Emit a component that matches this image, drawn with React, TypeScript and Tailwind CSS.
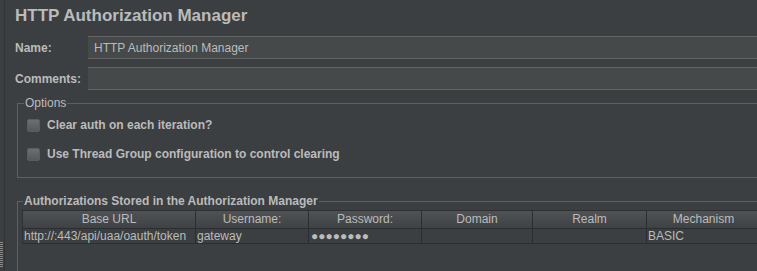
import React from 'react';

const columns = [
  { label: 'Base URL', width: 'w-[173px]' },
  { label: 'Username:', width: 'w-[113px]' },
  { label: 'Password:', width: 'w-[113px]' },
  { label: 'Domain', width: 'w-[111px]' },
  { label: 'Realm', width: 'w-[114px]' },
  { label: 'Mechanism', width: 'w-[114px]' },
];

const row = ['http://:443/api/uaa/oauth/token', 'gateway', '●●●●●●●●', '', '', 'BASIC'];

function Checkbox() {
  return (
    <span className="w-[13px] h-[13px] shrink-0 rounded-[2px] border border-[#5b5e60] bg-gradient-to-b from-[#6c6f71] to-[#56595b]" />
  );
}

export default function App() {
  return (
    <div
      className="w-[757px] h-[271px] overflow-hidden bg-[#3c3f41] flex text-[#bbbbbb]"
      style={{ fontFamily: '"Liberation Sans", Arial, sans-serif' }}
    >
      <div className="w-[4px] shrink-0 flex flex-col justify-end pb-[4px]">
        <div className="h-[25px] w-[3px] bg-[repeating-linear-gradient(to_bottom,#8a8a8a_0px,#8a8a8a_1px,transparent_1px,transparent_2px)]" />
      </div>
      <div className="w-px shrink-0 bg-[#323435]" />
      <div className="w-[800px] shrink-0 pl-[10px] pt-[5px]">
        <h1 className="text-[17px] leading-[22px] font-bold">HTTP Authorization Manager</h1>

        <div className="flex items-center mt-[9px] h-[23px]">
          <span className="w-[73px] text-[12px] font-bold">Name:</span>
          <div className="flex-1 h-[23px] bg-[#45494a] border-y border-[#646464] flex items-center pl-[6px] text-[12px]">
            HTTP Authorization Manager
          </div>
        </div>
        <div className="flex items-center mt-[8px] h-[23px]">
          <span className="w-[73px] text-[12px] font-bold">Comments:</span>
          <div className="flex-1 h-[23px] bg-[#45494a] border-y border-[#646464]" />
        </div>

        <fieldset className="ml-[2px] mt-[6px] border border-[#5e6163] h-[82px] pl-[9px]">
          <legend className="text-[12px] leading-[14px] px-[1px] -ml-[3px]">Options</legend>
          <div className="flex items-center gap-[7px] mt-[8px] h-[14px] text-[12px] font-bold">
            <Checkbox />
            <span>Clear auth on each iteration?</span>
          </div>
          <div className="flex items-center gap-[7px] mt-[15px] h-[14px] text-[12px] font-bold">
            <Checkbox />
            <span>Use Thread Group configuration to control clearing</span>
          </div>
        </fieldset>

        <fieldset className="ml-[2px] mt-[16px] border border-[#5e6163] h-[90px] pl-[4px]">
          <legend className="text-[12px] leading-[14px] font-bold px-[1px] ml-[1px]">
            Authorizations Stored in the Authorization Manager
          </legend>
          <div className="mt-[2px] border-l border-t border-[#2e3032]">
            <div className="flex h-[18px] bg-gradient-to-b from-[#505355] to-[#3f4244] border-b border-[#2b2d2e]">
              {columns.map((c) => (
                <div
                  key={c.label}
                  className={`${c.width} shrink-0 border-r border-[#2b2d2e] text-center text-[12px] leading-[17px]`}
                >
                  {c.label}
                </div>
              ))}
            </div>
            <div className="flex h-[15px] border-b border-[#2b2d2e]">
              {columns.map((c, i) => (
                <div
                  key={c.label}
                  className={`${c.width} shrink-0 border-r border-[#2b2d2e] text-[12px] leading-[14px] pl-[1px] whitespace-nowrap overflow-hidden ${i === 2 ? 'text-[8px] pl-[2px]' : ''}`}
                >
                  {row[i]}
                </div>
              ))}
            </div>
          </div>
        </fieldset>
      </div>
    </div>
  );
}
